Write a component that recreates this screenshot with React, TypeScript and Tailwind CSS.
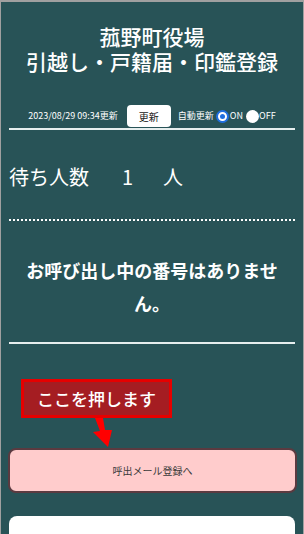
import React from 'react';

export default function App() {
  return (
    <div
      className="min-h-screen bg-[#285357] border-t-2 border-x border-[#a0a0a0] text-white overflow-hidden"
      style={{ fontFamily: '"Noto Sans CJK JP", "Noto Sans", sans-serif' }}
    >
      <h1 className="pt-[22px] text-center text-[21px] leading-[25px] font-medium">
        菰野町役場
        <br />
        引越し・戸籍届・印鑑登録
      </h1>

      <div className="mt-[31px] flex items-center justify-center h-[22px] text-[9px]">
        <span>2023/08/29 09:34更新</span>
        <button className="ml-[9px] w-[44px] h-[22px] rounded bg-white text-[#222] text-[10px]">更新</button>
        <span className="ml-[7px]">自動更新</span>
        <span className="ml-[2px] w-[13px] h-[13px] rounded-full border-[2px] border-[#1f6fe0] bg-white flex items-center justify-center">
          <span className="w-[5px] h-[5px] rounded-full bg-[#1f6fe0]" />
        </span>
        <span className="ml-[1px]">ON</span>
        <span className="ml-[3px] w-[13px] h-[13px] rounded-full bg-white" />
        <span>OFF</span>
      </div>
      <div className="mx-2 mt-[1px] h-[2px] bg-[#e6eeee]" />

      <div className="mt-[33px] ml-2 flex items-center text-[20px] leading-[28px]">
        <span>待ち人数</span>
        <span className="ml-[33px]">1</span>
        <span className="ml-[30px]">人</span>
      </div>

      <div className="mx-2 mt-[28px] border-t-2 border-dotted border-white" />

      <p className="mx-2 mt-[33px] px-4 text-center text-[18px] leading-[33px] font-bold">
        お呼び出し中の番号はありません。
      </p>

      <div className="mx-2 mt-[22px] h-[2px] bg-[#e6eeee]" />

      <div className="mt-[35px] ml-5 w-[151px] h-[39px] border-[3px] border-[#e60000] bg-[#a51d22] flex items-center justify-center text-[17px] font-medium">
        ここを押します
      </div>
      <svg width="304" height="30" viewBox="0 0 304 30" className="block">
        <polygon points="94,0 102,0 104,12 111,12 107,29 92,14 99,13" fill="#ff0000" />
      </svg>

      <button className="block mx-[7px] w-[289px] h-[45px] rounded-lg bg-[#ffcccc] border-2 border-[#5b3a40] text-[10px] text-[#3a3a3a]">
        呼出メール登録へ
      </button>

      <div className="mx-2 mt-[23px] h-[40px] rounded-t-lg bg-white" />
    </div>
  );
}
